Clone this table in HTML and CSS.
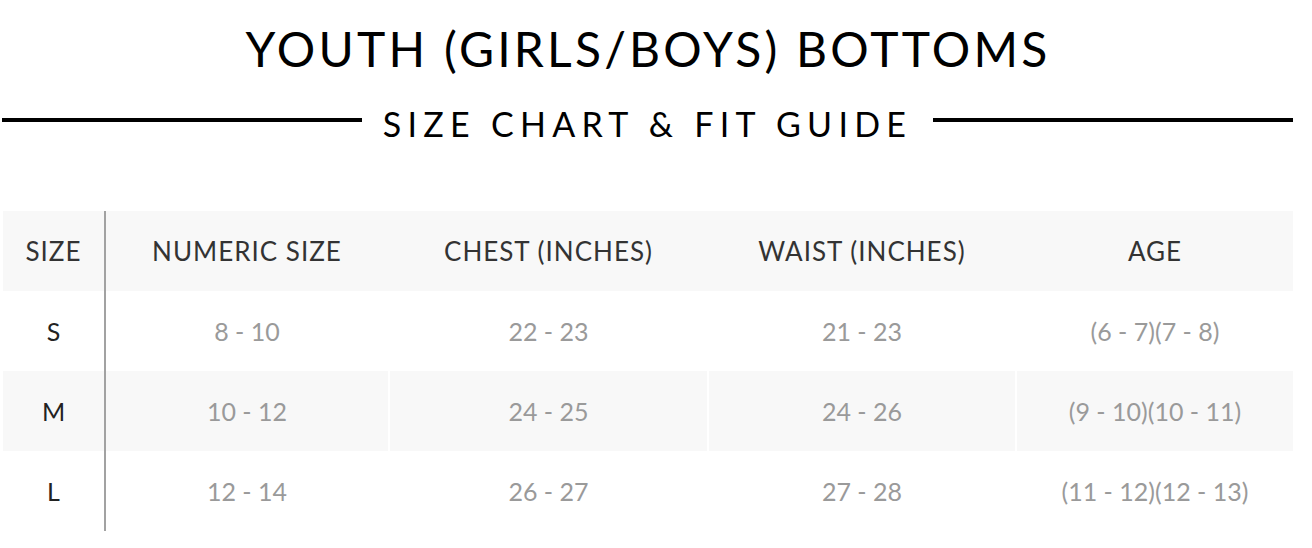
FILE: index.html
```html
<!DOCTYPE html>
<html lang="en">
<head>
<meta charset="utf-8">
<title>Youth (Girls/Boys) Bottoms – Size Chart</title>
<link rel="stylesheet" href="styles.css">
</head>
<body>
<main class="page">
  <h1 class="title">YOUTH (GIRLS/BOYS) BOTTOMS</h1>
  <div class="subtitle">
    <span class="rule"></span>
    <h2 class="subtitle-text">SIZE CHART &amp; FIT GUIDE</h2>
    <span class="rule"></span>
  </div>
  <div class="chart">
    <div class="row head">
      <div class="cell c0">SIZE</div>
      <div class="cell c1">NUMERIC SIZE</div>
      <div class="cell c2">CHEST (INCHES)</div>
      <div class="cell c3">WAIST (INCHES)</div>
      <div class="cell c4">AGE</div>
    </div>
    <div class="row">
      <div class="cell c0">S</div>
      <div class="cell c1">8 - 10</div>
      <div class="cell c2">22 - 23</div>
      <div class="cell c3">21 - 23</div>
      <div class="cell c4">(6 - 7)(7 - 8)</div>
    </div>
    <div class="row alt">
      <div class="cell c0">M</div>
      <div class="cell c1">10 - 12</div>
      <div class="cell c2">24 - 25</div>
      <div class="cell c3">24 - 26</div>
      <div class="cell c4">(9 - 10)(10 - 11)</div>
    </div>
    <div class="row">
      <div class="cell c0">L</div>
      <div class="cell c1">12 - 14</div>
      <div class="cell c2">26 - 27</div>
      <div class="cell c3">27 - 28</div>
      <div class="cell c4">(11 - 12)(12 - 13)</div>
    </div>
  </div>
</main>
</body>
</html>
```

FILE: styles.css
```css
* { box-sizing: border-box; }

html, body {
  margin: 0;
  padding: 0;
  background: #ffffff;
}

body {
  font-family: Lato, "Noto Sans", sans-serif;
  color: #000;
}

.page {
  width: 1290px;
  margin-left: 3px;
  display: flex;
  flex-direction: column;
}

.title {
  margin: 0;
  padding-top: 21px;
  font-size: 48px;
  line-height: 56px;
  font-weight: 400;
  letter-spacing: 3.2px;
  text-align: center;
  color: #000;
}

.subtitle {
  display: flex;
  align-items: center;
  gap: 21px;
  margin-top: 27px;
  margin-left: -1px;
}

.rule {
  flex: 1;
  height: 4px;
  margin-bottom: 8px;
  background: #000;
}

.subtitle-text {
  margin: 0;
  font-size: 34px;
  line-height: 40px;
  font-weight: 400;
  letter-spacing: 6.3px;
  color: #000;
}

.chart {
  margin-top: 67px;
  display: flex;
  flex-direction: column;
}

.row {
  display: grid;
  grid-template-columns: 101px 284px 319px 308px 278px;
  height: 80px;
}

.row.head {
  background: #f8f8f8;
}

.row.alt .cell {
  background: #f8f8f8;
  background-clip: padding-box;
}

.cell {
  display: flex;
  align-items: center;
  justify-content: center;
  font-size: 25px;
  color: #9a9a9a;
}

.row.head .cell {
  font-size: 26px;
  letter-spacing: 1px;
  color: #333;
}

.cell.c0 {
  color: #222;
}

.cell.c1 {
  border-left: 2px solid #a2a2a2;
}

.cell.c2,
.cell.c3,
.cell.c4 {
  border-left: 2px solid transparent;
}
```
